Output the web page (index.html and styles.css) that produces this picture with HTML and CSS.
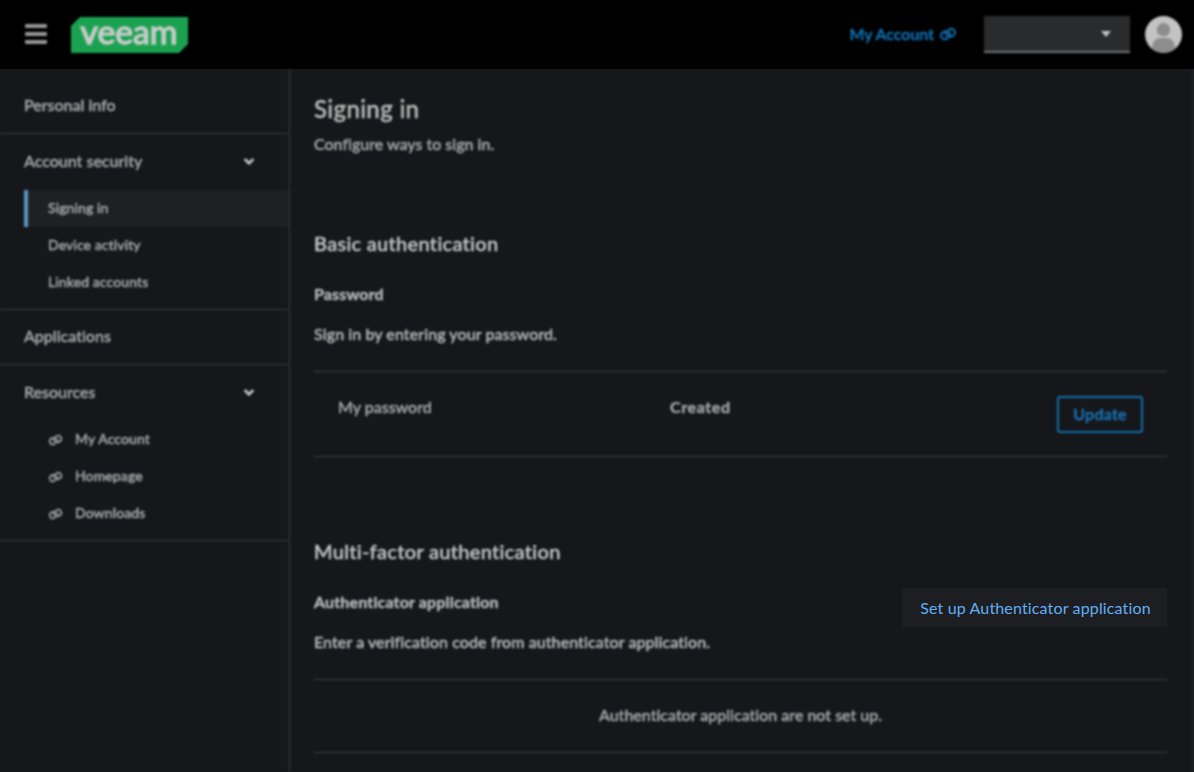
FILE: index.html
```html
<!DOCTYPE html>
<html lang="en">
<head>
    <meta charset="UTF-8">
    <meta name="viewport" content="width=device-width, initial-scale=1.0">
    <title>Signing in</title>
    <link rel="stylesheet" href="styles.css">
</head>
<body>
    <svg width="0" height="0" class="defs">
        <symbol id="link" viewBox="0 0 18 14">
            <g transform="rotate(-20 9 7)" fill="none" stroke="currentColor" stroke-width="2" stroke-linecap="round">
                <path d="M6.8 11H5.400a3.700 3.700 0 0 1 0-7.400h1.600a3.700 3.700 0 0 1 3.500 5"/>
                <path d="M11.200 3h1.400a3.700 3.700 0 0 1 0 7.400H11a3.700 3.700 0 0 1-3.500-5"/>
            </g>
        </symbol>
        <symbol id="chevron" viewBox="0 0 12 9">
            <path d="M1.7 2l4.3 4.2L10.3 2" fill="none" stroke="currentColor" stroke-width="2.8"/>
        </symbol>
    </svg>

    <header class="header">
        <button class="menu-btn soft"><span></span><span></span><span></span></button>
        <div class="logo soft">
            <svg viewBox="0 0 117 36">
                <path d="M9 0H117V27L108 36H0V9Z" fill="#1ba251"/>
                <text x="9.500" y="26.500" textLength="97" lengthAdjust="spacingAndGlyphs">veeam</text>
            </svg>
        </div>
        <a href="#" class="account-link soft">My Account <svg><use href="#link"/></svg></a>
        <div class="dropdown soft"><i></i></div>
        <svg class="avatar soft" viewBox="0 0 36 36">
            <clipPath id="round"><circle cx="18" cy="18" r="18"/></clipPath>
            <g clip-path="url(#round)">
                <rect width="36" height="36" fill="#c3c3c3"/>
                <circle cx="18" cy="13.3" r="6.5" fill="#8d8d8d"/>
                <path d="M7 36v-6.500a8 8 0 0 1 8-8h6a8 8 0 0 1 8 8V36z" fill="#8d8d8d"/>
            </g>
        </svg>
    </header>

    <div class="page">
        <nav class="sidebar soft">
            <div class="group">
                <a href="#" class="item">Personal info</a>
            </div>
            <div class="group open">
                <a href="#" class="item">Account security <svg><use href="#chevron"/></svg></a>
                <a href="#" class="sub active">Signing in</a>
                <a href="#" class="sub">Device activity</a>
                <a href="#" class="sub">Linked accounts</a>
            </div>
            <div class="group">
                <a href="#" class="item">Applications</a>
            </div>
            <div class="group open">
                <a href="#" class="item">Resources <svg><use href="#chevron"/></svg></a>
                <a href="#" class="sub"><svg><use href="#link"/></svg>My Account</a>
                <a href="#" class="sub"><svg><use href="#link"/></svg>Homepage</a>
                <a href="#" class="sub"><svg><use href="#link"/></svg>Downloads</a>
            </div>
        </nav>

        <main class="content">
            <div class="soft">
                <h1>Signing in</h1>
                <p class="intro">Configure ways to sign in.</p>
            </div>

            <section class="soft">
                <h2>Basic authentication</h2>
                <h3>Password</h3>
                <p>Sign in by entering your password.</p>
                <div class="row">
                    <span class="name">My password</span>
                    <b class="created">Created</b>
                    <button class="update">Update</button>
                </div>
            </section>

            <section>
                <h2 class="soft">Multi-factor authentication</h2>
                <div class="method">
                    <div class="soft">
                        <h3>Authenticator application</h3>
                        <p>Enter a verification code from authenticator application.</p>
                    </div>
                    <button class="setup">Set up Authenticator application</button>
                </div>
                <div class="row empty soft">Authenticator application are not set up.</div>
            </section>
        </main>
    </div>
</body>
</html>
```

FILE: styles.css
```css
* {
    margin: 0;
    padding: 0;
    box-sizing: border-box;
}

body {
    font-family: Lato, "Open Sans", sans-serif;
    font-size: 16px;
    font-weight: 500;
    line-height: 24px;
    font-variant-ligatures: none;
    height: 100vh;
    overflow: hidden;
    background: #16171a;
    color: #a4a5a7;
}

a {
    color: inherit;
    text-decoration: none;
}

button {
    font: inherit;
    background: none;
    border: none;
}

.defs {
    position: absolute;
}

/* everything behind the highlighted button is slightly out of focus */
.soft {
    filter: blur(0.8px);
    -webkit-text-stroke: 0.45px;
}

/* Header */
.header {
    height: 69px;
    background: #000;
    display: flex;
    align-items: center;
    padding: 0 12px 0 25px;
}

.menu-btn {
    width: 22px;
    display: flex;
    flex-direction: column;
    gap: 4px;
    margin-top: -1px;
}

.menu-btn span {
    height: 4px;
    border-radius: 1px;
    background: #959595;
}

.logo {
    width: 117px;
    height: 36px;
    margin-left: 24px;
}

.logo svg {
    display: block;
    overflow: visible;
}

.logo text {
    font-size: 33px;
    line-height: 1;
    font-weight: 400;
    fill: #c8ccc9;
    stroke: #c8ccc9;
    stroke-width: 1.4px;
}

.account-link {
    display: flex;
    align-items: center;
    margin-left: auto;
    padding-bottom: 1px;
    color: #0d77bd;
}

.account-link svg {
    width: 18px;
    height: 14px;
    margin-left: 5px;
}

.dropdown {
    width: 146px;
    height: 37px;
    margin: 0 15px 0 27px;
    padding-right: 19px;
    background: #2a2b2d;
    border-bottom: 2px solid #717274;
    display: flex;
    align-items: center;
    justify-content: flex-end;
}

.dropdown i {
    border: 5px solid transparent;
    border-top: 6px solid #c5c5c5;
    border-bottom: 0;
}

.avatar {
    width: 37px;
    height: 37px;
}

.page {
    display: flex;
    height: 703px;
    border-right: 3px solid #1c1d1f;
}

/* Sidebar */
.sidebar {
    width: 290px;
    padding-top: 9px;
    border-right: 1px solid #3a3b3d;
}

.group {
    border-bottom: 1px solid #3f4043;
}

.group.open {
    padding-bottom: 8px;
}

.item {
    display: flex;
    align-items: center;
    justify-content: space-between;
    height: 54px;
    padding: 0 34px 2px 24px;
}

.group:first-child .item {
    height: 55px;
}

.open .item {
    height: 56px;
}

.item svg {
    width: 12px;
    height: 9px;
    margin-top: 1px;
    color: #c0c0c1;
}

.sub {
    display: flex;
    align-items: center;
    height: 37px;
    margin-left: 24px;
    padding: 0 0 2px 24px;
    font-size: 14px;
    letter-spacing: 0.1px;
}

.sub.active {
    background: #1f2023;
    border-left: 4px solid #5796c2;
    padding-left: 20px;
}

.sub svg {
    width: 15px;
    height: 12px;
    margin: 2px 12px 0 0;
}

/* Content */
.content {
    flex: 1;
    padding: 24px 24px 0;
}

h1 {
    font-size: 24px;
    font-weight: 500;
    line-height: 31px;
    letter-spacing: 0.35px;
    color: #b8b9ba;
}

.intro {
    margin-top: 8px;
}

section {
    margin-top: 74px;
}

section + section {
    margin-top: 81px;
}

h2 {
    font-size: 20px;
    font-weight: 500;
    line-height: 26px;
    letter-spacing: 0.3px;
    color: #c4c5c7;
}

h3 {
    margin: 26px 0 16px;
    font-size: 16px;
    font-weight: 700;
    line-height: 24px;
    letter-spacing: 0.15px;
    color: #b6b7b9;
}

section p {
    letter-spacing: 0.08px;
    color: #b4b5b7;
}

.row {
    display: grid;
    grid-template-columns: 332px 1fr auto;
    align-items: start;
    height: 86px;
    margin-top: 25px;
    padding: 23px 24px;
    border: solid #3f4043;
    border-width: 1px 0;
}

.created {
    letter-spacing: 0.6px;
}

.update {
    width: 86px;
    height: 37px;
    margin-top: 1px;
    padding-bottom: 2px;
    border: 2px solid #1070ab;
    border-radius: 3px;
    color: #1679c0;
    letter-spacing: 0.3px;
}

.method {
    display: flex;
    align-items: flex-start;
    justify-content: space-between;
}

.setup {
    width: 265px;
    height: 39px;
    margin-top: 24px;
    padding-left: 2px;
    background: #1d1e21;
    color: #62aff5;
    font-weight: 400;
    letter-spacing: 0.15px;
}

.row.empty {
    display: block;
    height: 74px;
    text-align: center;
}
```
